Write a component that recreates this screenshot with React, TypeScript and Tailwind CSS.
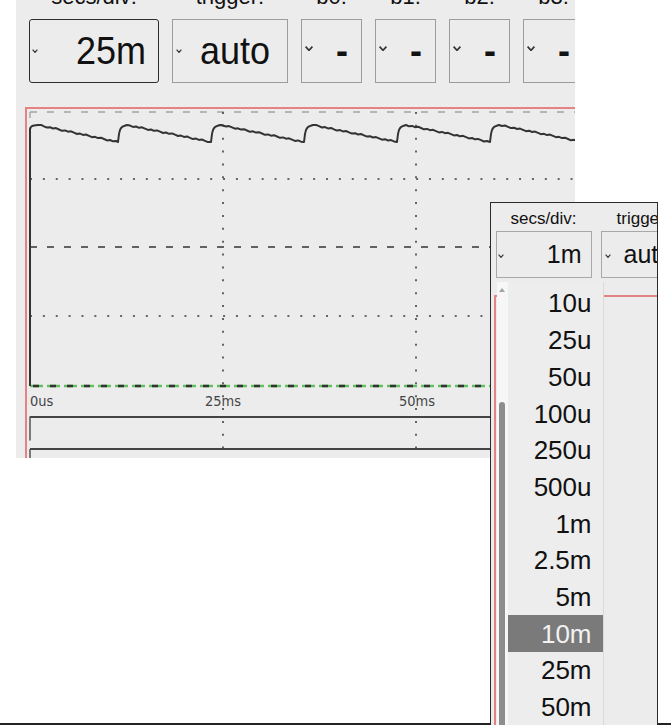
import React from 'react';

const mainControls = [
  { label: 'secs/div:', value: '25m', w: 'w-[130px]', kind: 'focused' },
  { label: 'trigger:', value: 'auto', w: 'w-[116px]', kind: 'plain' },
  { label: 'b0:', value: '-', w: 'w-[61px]', kind: 'bit' },
  { label: 'b1:', value: '-', w: 'w-[61px]', kind: 'bit' },
  { label: 'b2:', value: '-', w: 'w-[61px]', kind: 'bit' },
  { label: 'b3:', value: '-', w: 'w-[61px]', kind: 'bit' },
];

const timebase = ['10u', '25u', '50u', '100u', '250u', '500u', '1m', '2.5m', '5m', '10m', '25m', '50m'];

function Chevron({ w, h, sw = 1.2 }: { w: number; h: number; sw?: number }) {
  return (
    <svg width={w} height={h} viewBox={`0 0 ${w} ${h}`} className="shrink-0">
      <polyline
        points={`0.6,0.6 ${w / 2},${h - 0.6} ${w - 0.6},0.6`}
        fill="none"
        stroke="#333"
        strokeWidth={sw}
      />
    </svg>
  );
}

function wavePath() {
  const rises = [118, 211, 304, 397, 490, 583];
  let d = 'M30,386 L30,129 Q30.5,126 34,125.5 L38,125';
  let peak = 38;
  let i = 0;
  for (const r of rises) {
    for (let x = peak + 3; x < r; x += 3) {
      const t = (x - peak) / (r - peak);
      const j = (((i * 7) % 5) - 2) * 0.35;
      i++;
      d += ` L${x},${(125 + 17 * t + j).toFixed(1)}`;
    }
    d += ` L${r},142 L${r + 1},134 Q${r + 2},127 ${r + 6},126 L${r + 9},125`;
    peak = r + 9;
  }
  return d;
}

function Plot() {
  const dot = '2 10.87';
  return (
    <svg width={548} height={349} viewBox="27 109 548 349" className="block">
      {/* grid */}
      <line x1={30} y1={112} x2={575} y2={112} stroke="#a3a3a3" strokeWidth={1.5} strokeDasharray="7 10" />
      <line x1={30} y1={112} x2={30} y2={118} stroke="#999" strokeWidth={1.2} />
      <line x1={30} y1={179} x2={575} y2={179} stroke="#666" strokeWidth={1.8} strokeDasharray={dot} />
      <line x1={30} y1={247} x2={575} y2={247} stroke="#333" strokeWidth={1.5} strokeDasharray="7 10" />
      <line x1={30} y1={316} x2={575} y2={316} stroke="#666" strokeWidth={1.8} strokeDasharray={dot} />
      <line x1={223} y1={112} x2={223} y2={458} stroke="#555" strokeWidth={1.8} strokeDasharray={dot} />
      <line x1={416} y1={112} x2={416} y2={458} stroke="#555" strokeWidth={1.8} strokeDasharray={dot} />

      {/* baseline */}
      <line x1={30} y1={386} x2={575} y2={386} stroke="#5fc25f" strokeWidth={2.5} strokeDasharray="13 4" />
      <line x1={30} y1={386} x2={575} y2={386} stroke="#333" strokeWidth={2.4} strokeDasharray="6 11" strokeDashoffset={-3} />

      {/* trace */}
      <path d={wavePath()} fill="none" stroke="#333" strokeWidth={2} strokeLinejoin="round" />

      {/* time axis */}
      <g fontFamily="'DejaVu Sans', sans-serif" fontSize={13} fill="#444">
        <text transform="translate(30,406) scale(1,1.12)">0us</text>
        <text transform="translate(223,406) scale(1,1.12)" textAnchor="middle">25ms</text>
        <text transform="translate(417,406) scale(1,1.12)" textAnchor="middle">50ms</text>
      </g>

      {/* next channel panels */}
      <line x1={30} y1={417} x2={575} y2={417} stroke="#444" strokeWidth={2} />
      <line x1={30} y1={417} x2={30} y2={440} stroke="#555" strokeWidth={1.5} strokeLinecap="round" />
      <line x1={30} y1={449} x2={575} y2={449} stroke="#444" strokeWidth={2} />
      <line x1={30} y1={449} x2={30} y2={458} stroke="#555" strokeWidth={1.5} />
    </svg>
  );
}

function MainPanel() {
  return (
    <div className="ml-[16px] h-[458px] w-[559px] shrink-0 overflow-hidden bg-[#ececec]">
      <div className="-mt-[16px] flex h-[26px] gap-[13px] whitespace-nowrap pl-[13px] text-[22px] leading-[26px]">
        {mainControls.map((c) => (
          <div key={c.label} className={`${c.w} shrink-0 text-center`}>
            {c.label}
          </div>
        ))}
      </div>
      <div className="mt-[9px] flex gap-[13px] pl-[13px]">
        {mainControls.map((c) =>
          c.kind === 'focused' ? (
            <div
              key={c.label}
              className={`${c.w} flex h-[64px] shrink-0 items-center rounded-[3px] border-[1.5px] border-[#2e2e2e] pl-[2px] pr-[12px]`}
            >
              <Chevron w={6} h={4} />
              <span className="flex-1 text-right text-[36px] leading-none">
                <span className="inline-block scale-y-[1.1]">{c.value}</span>
              </span>
            </div>
          ) : c.kind === 'plain' ? (
            <div
              key={c.label}
              className={`${c.w} flex h-[64px] shrink-0 items-center border border-[#9c9c9c] pl-[3px] pr-[17px]`}
            >
              <Chevron w={6} h={4} />
              <span className="flex-1 text-right text-[36px] leading-none">
                <span className="inline-block scale-y-[1.1]">{c.value}</span>
              </span>
            </div>
          ) : (
            <div
              key={c.label}
              className={`${c.w} flex h-[64px] shrink-0 items-center border border-[#9c9c9c] pl-[3px] pr-[13px]`}
            >
              <span className="-mt-[5px]">
                <Chevron w={8} h={5} sw={1.6} />
              </span>
              <span className="flex-1 text-right text-[36px] font-bold leading-none">{c.value}</span>
            </div>
          )
        )}
      </div>
      <div className="ml-[9px] mt-[24px] h-[351px] border-l-2 border-t-2 border-[#e38383]">
        <Plot />
      </div>
    </div>
  );
}

function Overlay() {
  return (
    <div className="absolute left-[490px] top-[202px] flex h-[523px] w-[168px] flex-col overflow-hidden border-x-[1.5px] border-t-[1.5px] border-[#2a2a2a] bg-[#ececec] pl-[4.5px] pt-[6px]">
      <div className="flex gap-[9px] whitespace-nowrap text-[17px] leading-[20px]">
        <div className="w-[96px] shrink-0 text-center">secs/div:</div>
        <div className="w-[85px] shrink-0 text-center">trigger:</div>
      </div>
      <div className="mt-[1.5px] flex gap-[9px]">
        <div className="flex h-[47px] w-[96px] shrink-0 items-center border border-[#a8a8a8] pl-[1px] pr-[9px]">
          <span className="mt-[3px]">
            <Chevron w={6} h={4} sw={1.1} />
          </span>
          <span className="flex-1 text-right text-[25px] leading-none">1m</span>
        </div>
        <div className="flex h-[47px] w-[85px] shrink-0 items-center border border-[#a8a8a8] pl-[3px]">
          <span className="mt-[3px]">
            <Chevron w={6} h={4} sw={1.1} />
          </span>
          <span className="ml-[13px] whitespace-nowrap text-[25px] leading-none">auto</span>
        </div>
      </div>
      <div className="-ml-[2px] mt-[17px] flex-1 border-l-2 border-t-2 border-[#e38383]" />

      <div className="absolute bottom-0 left-[5.5px] top-[78.5px] flex w-[107px]">
        <div className="flex w-[11px] flex-col items-center bg-[#f7f7f7] pt-[6px]">
          <svg width={6} height={4} viewBox="0 0 6 4" className="shrink-0">
            <polygon points="0,4 3,0 6,4" fill="#a3a3a3" />
          </svg>
          <div className="mt-[110px] w-[6px] flex-1 rounded-t-full bg-[#8d8d8d]" />
        </div>
        <div className="w-[96px] border-r border-[#dadada] bg-[#ededed] pt-[3.6px]">
          {timebase.map((t) => (
            <div
              key={t}
              className={`flex h-[36.7px] items-center justify-end pr-[11px] text-[26px] leading-none ${
                t === '10m' ? 'bg-[#7a7a7a] text-[#f2f2f2]' : ''
              }`}
            >
              {t}
            </div>
          ))}
        </div>
      </div>
    </div>
  );
}

export default function App() {
  return (
    <div className="relative flex h-[725px] w-[671px] flex-col overflow-hidden bg-white font-['Liberation_Sans',Arial,sans-serif] text-[#111]">
      <MainPanel />
      <div className="flex-1" />
      <div className="h-[2px] shrink-0 bg-[#222]" />
      <Overlay />
    </div>
  );
}
